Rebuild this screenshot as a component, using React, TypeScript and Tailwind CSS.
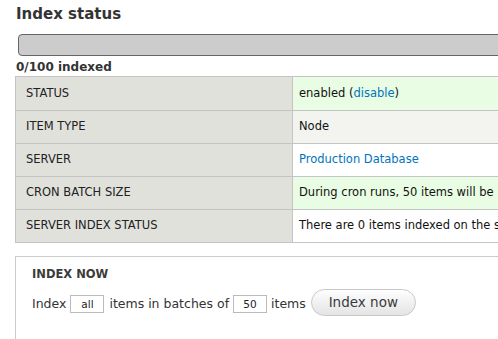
const ROWS: { label: string; bg: string; value: React.ReactNode }[] = [
  {
    label: 'STATUS',
    bg: 'bg-[#e8fde3]',
    value: (
      <>
        enabled (<a className="text-[#0074bd]">disable</a>)
      </>
    ),
  },
  { label: 'ITEM TYPE', bg: 'bg-[#f3f3ef]', value: 'Node' },
  { label: 'SERVER', bg: 'bg-white', value: <a className="text-[#0074bd]">Production Database</a> },
  {
    label: 'CRON BATCH SIZE',
    bg: 'bg-[#e8fde3]',
    value: 'During cron runs, 50 items will be indexed per batch.',
  },
  {
    label: 'SERVER INDEX STATUS',
    bg: 'bg-white',
    value: 'There are 0 items indexed on the server for this index.',
  },
];

export default function App() {
  return (
    <div
      className="w-[498px] h-[339px] overflow-hidden bg-white text-[#333]"
      style={{ fontFamily: '"DejaVu Sans", Verdana, sans-serif' }}
    >
      <div className="w-[760px] pl-[15px]">
        <h2 className="ml-[1px] mt-[7px] h-[15px] text-[15px] leading-[15px] font-bold text-[#333]">Index status</h2>

        {/* Progress */}
        <div className="ml-[3px] mt-[12px] h-[22px] rounded-l-[4px] border border-[#666] bg-[#ccc]" />
        <div className="ml-[1px] mt-[4px] h-[14px] text-[12px] leading-[14px] font-bold">0/100 indexed</div>

        {/* Status table */}
        <div className="mt-[2px] border border-[#c4c4c4] text-[11.5px]">
          {ROWS.map((row, i) => (
            <div key={row.label} className={`flex h-[33px] ${i > 0 ? 'border-t border-[#c4c4c4]' : 'h-[32px]'}`}>
              <div className="w-[276px] flex items-center bg-[#e1e1dc] pl-[10px] text-[#222]">{row.label}</div>
              <div className={`flex-1 flex items-center border-l border-[#c4c4c4] pl-[6px] text-[#111] whitespace-nowrap ${row.bg}`}>
                {row.value}
              </div>
            </div>
          ))}
        </div>

        {/* Index now */}
        <fieldset className="mt-[13px] h-[120px] border border-[#ccc] pl-[16px] pt-[10px]">
          <div className="h-[14px] text-[11.5px] leading-[14px] font-bold text-[#3b3b3b]">INDEX NOW</div>
          <div className="mt-[8px] flex items-start text-[12.5px] leading-[15px] text-[#333]">
            <span className="mt-[7px]">Index</span>
            <div className="ml-[4px] mt-[6px] flex h-[18px] w-[34px] items-center justify-center border border-[#bbb] text-[10.5px] text-[#222]">
              all
            </div>
            <span className="ml-[5px] mt-[7px]">items in batches of</span>
            <div className="ml-[4px] mt-[6px] flex h-[18px] w-[34px] items-center justify-center border border-[#bbb] text-[10.5px] text-[#222]">
              50
            </div>
            <span className="ml-[4px] mt-[7px]">items</span>
            <button className="ml-[5px] flex h-[27px] w-[105px] items-center justify-center rounded-full border border-[#c8c8c8] bg-gradient-to-b from-[#fefefe] to-[#e4e4e4] text-[13.5px] text-[#3a3a3a]">
              Index now
            </button>
          </div>
        </fieldset>
      </div>
    </div>
  );
}
